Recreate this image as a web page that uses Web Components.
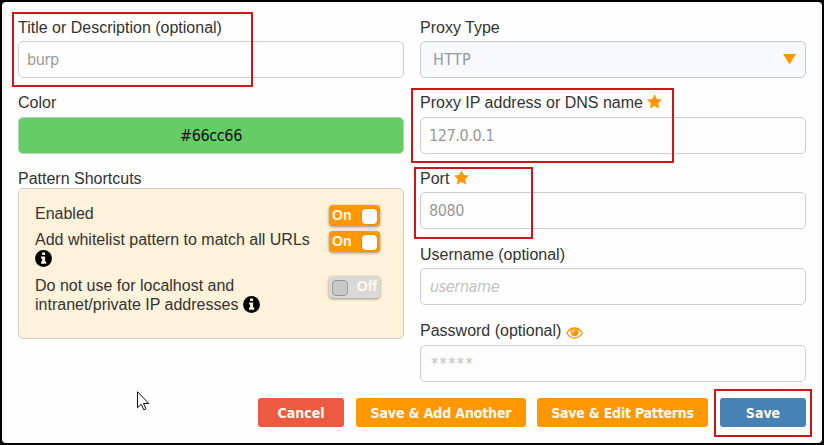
<!DOCTYPE html>
<html lang="en">
<head>
<meta charset="utf-8">
<title>Edit Proxy</title>
<style>
html, body { margin: 0; height: 100%; background: #000; }
body { width: 824px; height: 445px; overflow: hidden; font: 16px/19px "Liberation Sans", Arial, sans-serif; color: #333; position: relative; }
</style>
</head>
<body>
<proxy-dialog></proxy-dialog>
<script>
const UI_FONT = '"DejaVu Sans Condensed", "DejaVu Sans", sans-serif';
const define = (name, html) => customElements.define(name, class extends HTMLElement {
  constructor() {
    super();
    const t = document.createElement('template');
    t.innerHTML = html;
    this.attachShadow({ mode: 'open' }).append(t.content.cloneNode(true));
  }
});

define('star-icon', `<style>:host{display:inline-block;width:15px;height:15px;vertical-align:-1px}svg{display:block}</style>
<svg width="15" height="15" viewBox="0 0 15 15"><path fill="#ff9800" d="M7.5.2 9.8 4.9 15 5.6 11.2 9.3 12.1 14.6 7.5 12.1 2.9 14.6 3.8 9.3 0 5.6 5.2 4.9Z"/></svg>`);

define('eye-icon', `<style>:host{display:inline-block;width:17px;height:12px;vertical-align:-3px}svg{display:block}</style>
<svg width="17" height="12" viewBox="0 0 17 12"><path fill="none" stroke="#ff9800" stroke-width="1.3" d="M.8 6C2.5 3 5.2 1 8.5 1s6 2 7.7 5C14.500 9 11.800 11 8.500 11S2.500 9 .8 6Z"/><circle cx="8.500" cy="5.200" r="3.900" fill="#ff9800"/><path fill="none" stroke="#fff" stroke-width=".9" stroke-linecap="round" d="M6.300 5.100A2.200 2.200 0 0 1 8.500 2.900"/></svg>`);

define('info-icon', `<style>:host{display:inline-block;width:17px;height:17px;vertical-align:-3px}svg{display:block}</style>
<svg width="17" height="17" viewBox="0 0 17 17"><circle cx="8.500" cy="8.500" r="8.400" fill="#000"/><path fill="#fff3db" d="M7.100 2.500h3v2.600h-3zM6 6.500h4.100v5h1.100v2.200H6v-2.200h1.100V8.600H6z"/></svg>`);

define('form-field', `<style>:host{display:block}.label{height:var(--label-height,23px);line-height:19px;white-space:nowrap}</style>
<div class="label"><slot name="label"></slot></div><slot></slot>`);

define('text-box', `<style>
:host{display:flex;align-items:center;box-sizing:border-box;height:37px;padding:0 8px;border:1px solid #ccc;border-radius:5px;background:#fdfdfd;color:#999;font:16px/19px ${UI_FONT};letter-spacing:-.38px}
:host([hint]){color:#c2c2c2;font-style:italic;padding-left:9px}
:host([swatch]){background:#66cc66;color:#111;justify-content:center;border-color:#b5d3b5}
:host([select]){background:#f8f8ff;border-color:#c8c8d2;padding:0 9px 0 12px;justify-content:space-between;letter-spacing:.3px}
:host([masked]){letter-spacing:1.4px;padding-left:10px}
.arrow{display:none;width:13px;height:11px}
:host([select]) .arrow{display:block}
</style><span><slot></slot></span><svg class="arrow" viewBox="0 0 13 11"><path fill="#ff9800" d="M0 0h13L6.500 10.500Z"/></svg>`);

define('toggle-switch', `<style>
:host{display:flex;align-items:center;justify-content:space-between;box-sizing:border-box;width:51px;height:21px;padding:0 3px;margin:1px 0 -3px;border-radius:4px;background:#ff9800;color:#fff8e8;font:bold 14px/18px "Liberation Sans",Arial,sans-serif;box-shadow:0 1px 3px #776c;flex:none}
i{width:15px;height:15px;border-radius:4px;background:#fff;box-shadow:0 0 2px #b66d00;margin-top:1px}
span{margin-top:-2px}
:host([off]){flex-direction:row-reverse;background:#d8d8d8;height:22px;margin-top:0}
:host([off]) i{box-sizing:border-box;background:#c8c8c8;border:1px solid #999;box-shadow:none;width:16px;height:16px}
</style><span><slot></slot></span><i></i>`);

define('shortcut-row', `<style>:host{display:flex;justify-content:space-between;align-items:flex-start}.text{width:288px;margin-right:-8px}</style>
<div class="text"><slot></slot></div><slot name="switch"></slot>`);

define('shortcut-panel', `<style>:host{display:flex;flex-direction:column;gap:7px;box-sizing:border-box;height:151px;padding:15px 23px 0 16px;border:1px solid #ccc;border-radius:5px;background:#fff2da}</style><slot></slot>`);

define('action-button', `<style>
:host{display:flex;align-items:center;justify-content:center;box-sizing:border-box;height:29px;width:var(--w);border-radius:3px;background:var(--bg,#ff9800);color:#fffaf0;font:bold 14px/18px ${UI_FONT};white-space:nowrap}
</style><slot></slot>`);

define('highlight-box', `<style>:host{position:absolute;box-sizing:border-box;border:2px solid #cf1518;pointer-events:none}</style>`);

define('mouse-pointer', `<style>:host{position:absolute}svg{display:block}</style>
<svg width="13" height="20" viewBox="0 0 13 20"><path fill="#fff" stroke="#111" d="M.5.7v16.100l3.700-3.500 2.600 5.500 2.200-1-2.500-5.300h5.300Z"/></svg>`);

define('proxy-dialog', `<style>
:host{display:block;padding:2px;box-sizing:border-box;width:824px;height:445px}
main{box-sizing:border-box;height:441px;background:#fefefe;border-radius:4px;padding:16px;display:flex;flex-direction:column;gap:16px}
.columns{display:grid;grid-template-columns:386px 386px;gap:16px;height:364px}
.col{display:flex;flex-direction:column}
.g15{margin-top:15px}.g16{margin-top:16px}
.tall{--label-height:24px}
.last{margin-top:1px}
footer{display:flex;justify-content:flex-end;gap:12px}
.add{letter-spacing:-.14px}
.edit{margin-left:-1px;letter-spacing:-.22px}
.panel-label{height:19px}
</style>
<main>
 <div class="columns">
  <div class="col">
   <form-field><span slot="label">Title or Description (optional)</span><text-box>burp</text-box></form-field>
   <form-field class="g15 tall"><span slot="label">Color</span><text-box swatch>#66cc66</text-box></form-field>
   <div class="panel-label g15">Pattern Shortcuts</div>
   <shortcut-panel>
    <shortcut-row>Enabled<toggle-switch slot="switch">On</toggle-switch></shortcut-row>
    <shortcut-row>Add whitelist pattern to match all URLs<br><info-icon></info-icon><toggle-switch slot="switch">On</toggle-switch></shortcut-row>
    <shortcut-row class="last">Do not use for localhost and<br>intranet/private IP addresses <info-icon></info-icon><toggle-switch slot="switch" off>Off</toggle-switch></shortcut-row>
   </shortcut-panel>
  </div>
  <div class="col">
   <form-field><span slot="label">Proxy Type</span><text-box select>HTTP</text-box></form-field>
   <form-field class="g15 tall"><span slot="label">Proxy IP address or DNS name <star-icon></star-icon></span><text-box>127.0.0.1</text-box></form-field>
   <form-field class="g15"><span slot="label">Port <star-icon></star-icon></span><text-box>8080</text-box></form-field>
   <form-field class="g16"><span slot="label">Username (optional)</span><text-box hint>username</text-box></form-field>
   <form-field class="g16 tall"><span slot="label">Password (optional) <eye-icon></eye-icon></span><text-box hint masked>*****</text-box></form-field>
  </div>
 </div>
 <footer>
  <action-button style="--w:86px;--bg:#ec5a41">Cancel</action-button>
  <action-button class="add" style="--w:170px">Save &amp; Add Another</action-button>
  <action-button class="edit" style="--w:171px">Save &amp; Edit Patterns</action-button>
  <action-button style="--w:86px;--bg:#4682b4">Save</action-button>
 </footer>
</main>
<highlight-box style="left:12px;top:12px;width:241px;height:75px"></highlight-box>
<highlight-box style="left:411px;top:88px;width:263px;height:75px"></highlight-box>
<highlight-box style="left:414px;top:167px;width:119px;height:72px"></highlight-box>
<highlight-box style="left:714px;top:389px;width:98px;height:48px"></highlight-box>
<mouse-pointer style="left:137px;top:391px"></mouse-pointer>`);
</script>
</body>
</html>
